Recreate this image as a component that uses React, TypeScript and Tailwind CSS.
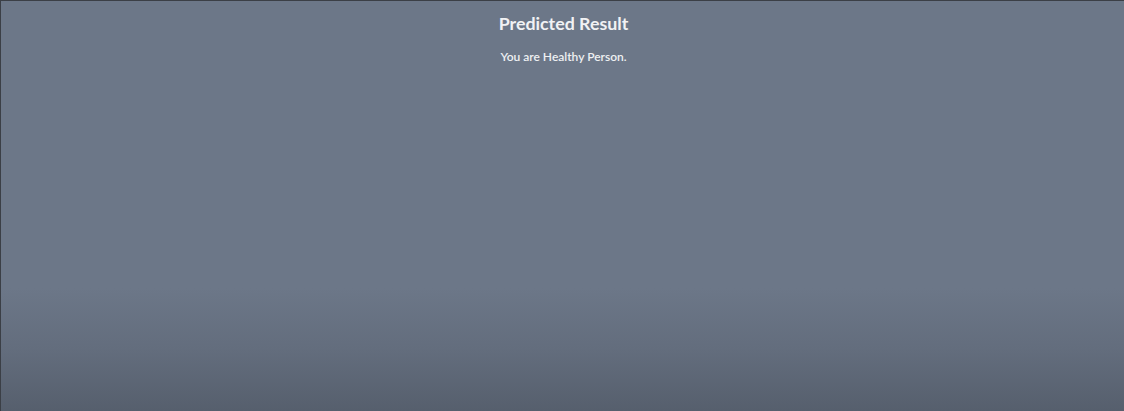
export default function App() {
  return (
    <div className="h-[411px] w-[1124px] overflow-hidden border-t border-l border-[#3b3f46] bg-[linear-gradient(to_bottom,#6c7788_0%,#6c7788_70%,#636d7d_85%,#565f6d_100%)] font-['Lato',sans-serif]">
      <div className="flex flex-col items-center pt-[11px] pl-[2px]">
        <h1 className="text-[17.8px] font-bold leading-[22px] text-[#f1f2f4]">Predicted Result</h1>
        <p className="mt-[15px] text-[12px] font-semibold leading-[16px] text-[#eef0f2]">You are Healthy Person.</p>
      </div>
    </div>
  )
}
